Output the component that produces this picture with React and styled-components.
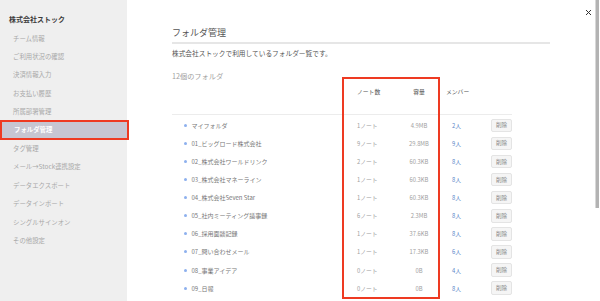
import React from 'react'
import styled, { createGlobalStyle } from 'styled-components'

const GlobalStyle = createGlobalStyle`
  html, body {
    margin: 0;
    padding: 0;
    background: #fff;
  }
  body {
    font-family: "Noto Sans CJK JP", "Noto Sans", sans-serif;
    -webkit-font-smoothing: antialiased;
  }
`

const menu = [
  'チーム情報',
  'ご利用状況の確認',
  '決済情報入力',
  'お支払い履歴',
  '所属部署管理',
  'フォルダ管理',
  'タグ管理',
  'メール→Stock連携設定',
  'データエクスポート',
  'データインポート',
  'シングルサインオン',
  'その他設定',
]

const folders = [
  { name: 'マイフォルダ', notes: '1ノート', size: '4.9MB', members: '2人' },
  { name: '01_ビッグロード株式会社', notes: '9ノート', size: '29.8MB', members: '9人' },
  { name: '02_株式会社ワールドリンク', notes: '2ノート', size: '60.3KB', members: '8人' },
  { name: '03_株式会社マネーライン', notes: '1ノート', size: '60.3KB', members: '8人' },
  { name: '04_株式会社Seven Star', notes: '1ノート', size: '60.3KB', members: '8人' },
  { name: '05_社内ミーティング議事録', notes: '6ノート', size: '2.3MB', members: '8人' },
  { name: '06_採用面談記録', notes: '1ノート', size: '37.6KB', members: '8人' },
  { name: '07_問い合わせメール', notes: '1ノート', size: '17.3KB', members: '6人' },
  { name: '08_事業アイデア', notes: '0ノート', size: '0B', members: '4人' },
  { name: '09_日報', notes: '0ノート', size: '0B', members: '8人' },
]

export default function App() {
  return (
    <>
      <GlobalStyle />
      <Page>
        <Sidebar>
          <Company>株式会社ストック</Company>
          {menu.map((item) => (
            <MenuItem key={item} $active={item === 'フォルダ管理'}>
              {item}
            </MenuItem>
          ))}
        </Sidebar>
        <Main>
          <Title>フォルダ管理</Title>
          <Lead>株式会社ストックで利用しているフォルダー覧です。</Lead>
          <Count>12個のフォルダ</Count>
          <Table>
            <HeadRow>
              <span />
              <HeadCell $pad={16}>ノート数</HeadCell>
              <HeadCell $center>容量</HeadCell>
              <HeadCell $pad={6}>メンバー</HeadCell>
              <span />
            </HeadRow>
            {folders.map((f) => (
              <Row key={f.name}>
                <Name>
                  <Dot />
                  {f.name}
                </Name>
                <Cell $pad={16}>{f.notes}</Cell>
                <Cell $center>{f.size}</Cell>
                <Members>{f.members}</Members>
                <DeleteButton>削除</DeleteButton>
              </Row>
            ))}
            <Highlight />
          </Table>
          <Close>
            <svg width="7" height="7" viewBox="0 0 7 7">
              <path d="M1 1L6 6M6 1L1 6" stroke="#333" strokeWidth="1" />
            </svg>
          </Close>
          <Scrollbar />
        </Main>
      </Page>
    </>
  )
}

const Page = styled.div`
  display: flex;
  width: 600px;
  height: 301px;
  overflow: hidden;
`

// sidebar

const Sidebar = styled.nav`
  width: 127px;
  flex-shrink: 0;
  background: #efefef;
  padding-top: 14px;
  box-sizing: border-box;
  display: flex;
  flex-direction: column;
`

const Company = styled.div`
  font-size: 7px;
  line-height: 10px;
  font-weight: 700;
  color: #3a3a3a;
  padding-left: 9px;
  margin-bottom: 5px;
`

const MenuItem = styled.div`
  height: 18.4px;
  display: flex;
  align-items: center;
  font-size: 6.4px;
  color: ${(p) => (p.$active ? '#fff' : '#a8a8a8')};
  font-weight: ${(p) => (p.$active ? 700 : 400)};
  padding-left: ${(p) => (p.$active ? '12px' : '13px')};
  margin: ${(p) => (p.$active ? '0.6px 0 1.2px 2px' : '0')};
  height: ${(p) => (p.$active ? '16.6px' : '18.4px')};
  background: ${(p) => (p.$active ? '#c7c6d2' : 'transparent')};
  outline: ${(p) => (p.$active ? '2px solid #ee3a22' : 'none')};
  outline-offset: 0;
  width: ${(p) => (p.$active ? '113px' : 'auto')};
`

// main panel

const Main = styled.main`
  position: relative;
  flex: 1;
  padding: 27px 0 0 45px;
  box-sizing: border-box;
`

const Title = styled.h1`
  margin: 0;
  width: 378px;
  font-size: 9px;
  line-height: 12px;
  font-weight: 400;
  color: #555;
  padding-bottom: 3px;
  border-bottom: 2px solid #e6e6e6;
`

const Lead = styled.p`
  margin: 4px 0 0;
  font-size: 6.7px;
  line-height: 10px;
  color: #555;
`

const Count = styled.div`
  margin-top: 13.4px;
  font-size: 7.2px;
  line-height: 10px;
  color: #a0a0a0;
`

const Table = styled.div`
  position: relative;
  width: 340px;
  margin-top: 5.6px;
`

const columns = '169px 57px 42px 45px 27px'

const HeadRow = styled.div`
  display: grid;
  grid-template-columns: ${columns};
  height: 10px;
  padding-bottom: 16.7px;
  border-bottom: 1px solid #ececec;
  margin-bottom: 1.6px;
  align-items: center;
`

const HeadCell = styled.span`
  font-size: 5.8px;
  line-height: 10px;
  color: #555;
  padding-left: ${(p) => (p.$pad ? `${p.$pad}px` : 0)};
  text-align: ${(p) => (p.$center ? 'center' : 'left')};
`

const Row = styled.div`
  display: grid;
  grid-template-columns: ${columns};
  height: 18.1px;
  align-items: center;
`

const Name = styled.span`
  display: flex;
  align-items: center;
  font-size: 6px;
  color: #777;
  padding-left: 11.5px;
`

const Dot = styled.i`
  width: 3px;
  height: 3px;
  border-radius: 50%;
  background: #8db0ee;
  margin-right: 5px;
`

const Cell = styled.span`
  font-size: 5.8px;
  color: #a0a0a0;
  padding-left: ${(p) => (p.$pad ? `${p.$pad}px` : 0)};
  text-align: ${(p) => (p.$center ? 'center' : 'left')};
`

const Members = styled.span`
  font-size: 5.8px;
  color: #5b86c8;
  padding-left: 12px;
`

const DeleteButton = styled.button`
  justify-self: end;
  width: 21px;
  height: 13.5px;
  padding: 0;
  font-family: inherit;
  font-size: 5.6px;
  color: #8a8a8a;
  background: #f5f5f5;
  border: 1px solid #e4e4e4;
  border-radius: 2px;
`

// annotation and chrome overlays

const Highlight = styled.div`
  position: absolute;
  left: 169.5px;
  top: -10px;
  width: 98.5px;
  height: 222px;
  border: 2px solid #ee3a22;
  box-sizing: border-box;
`

const Close = styled.div`
  position: absolute;
  top: 9px;
  right: 8px;
  line-height: 0;
`

const Scrollbar = styled.div`
  position: absolute;
  top: 0;
  right: 1px;
  width: 3px;
  height: 208px;
  background: #b3b3b3;
  border-left: 1px solid #d8d8d8;
`
